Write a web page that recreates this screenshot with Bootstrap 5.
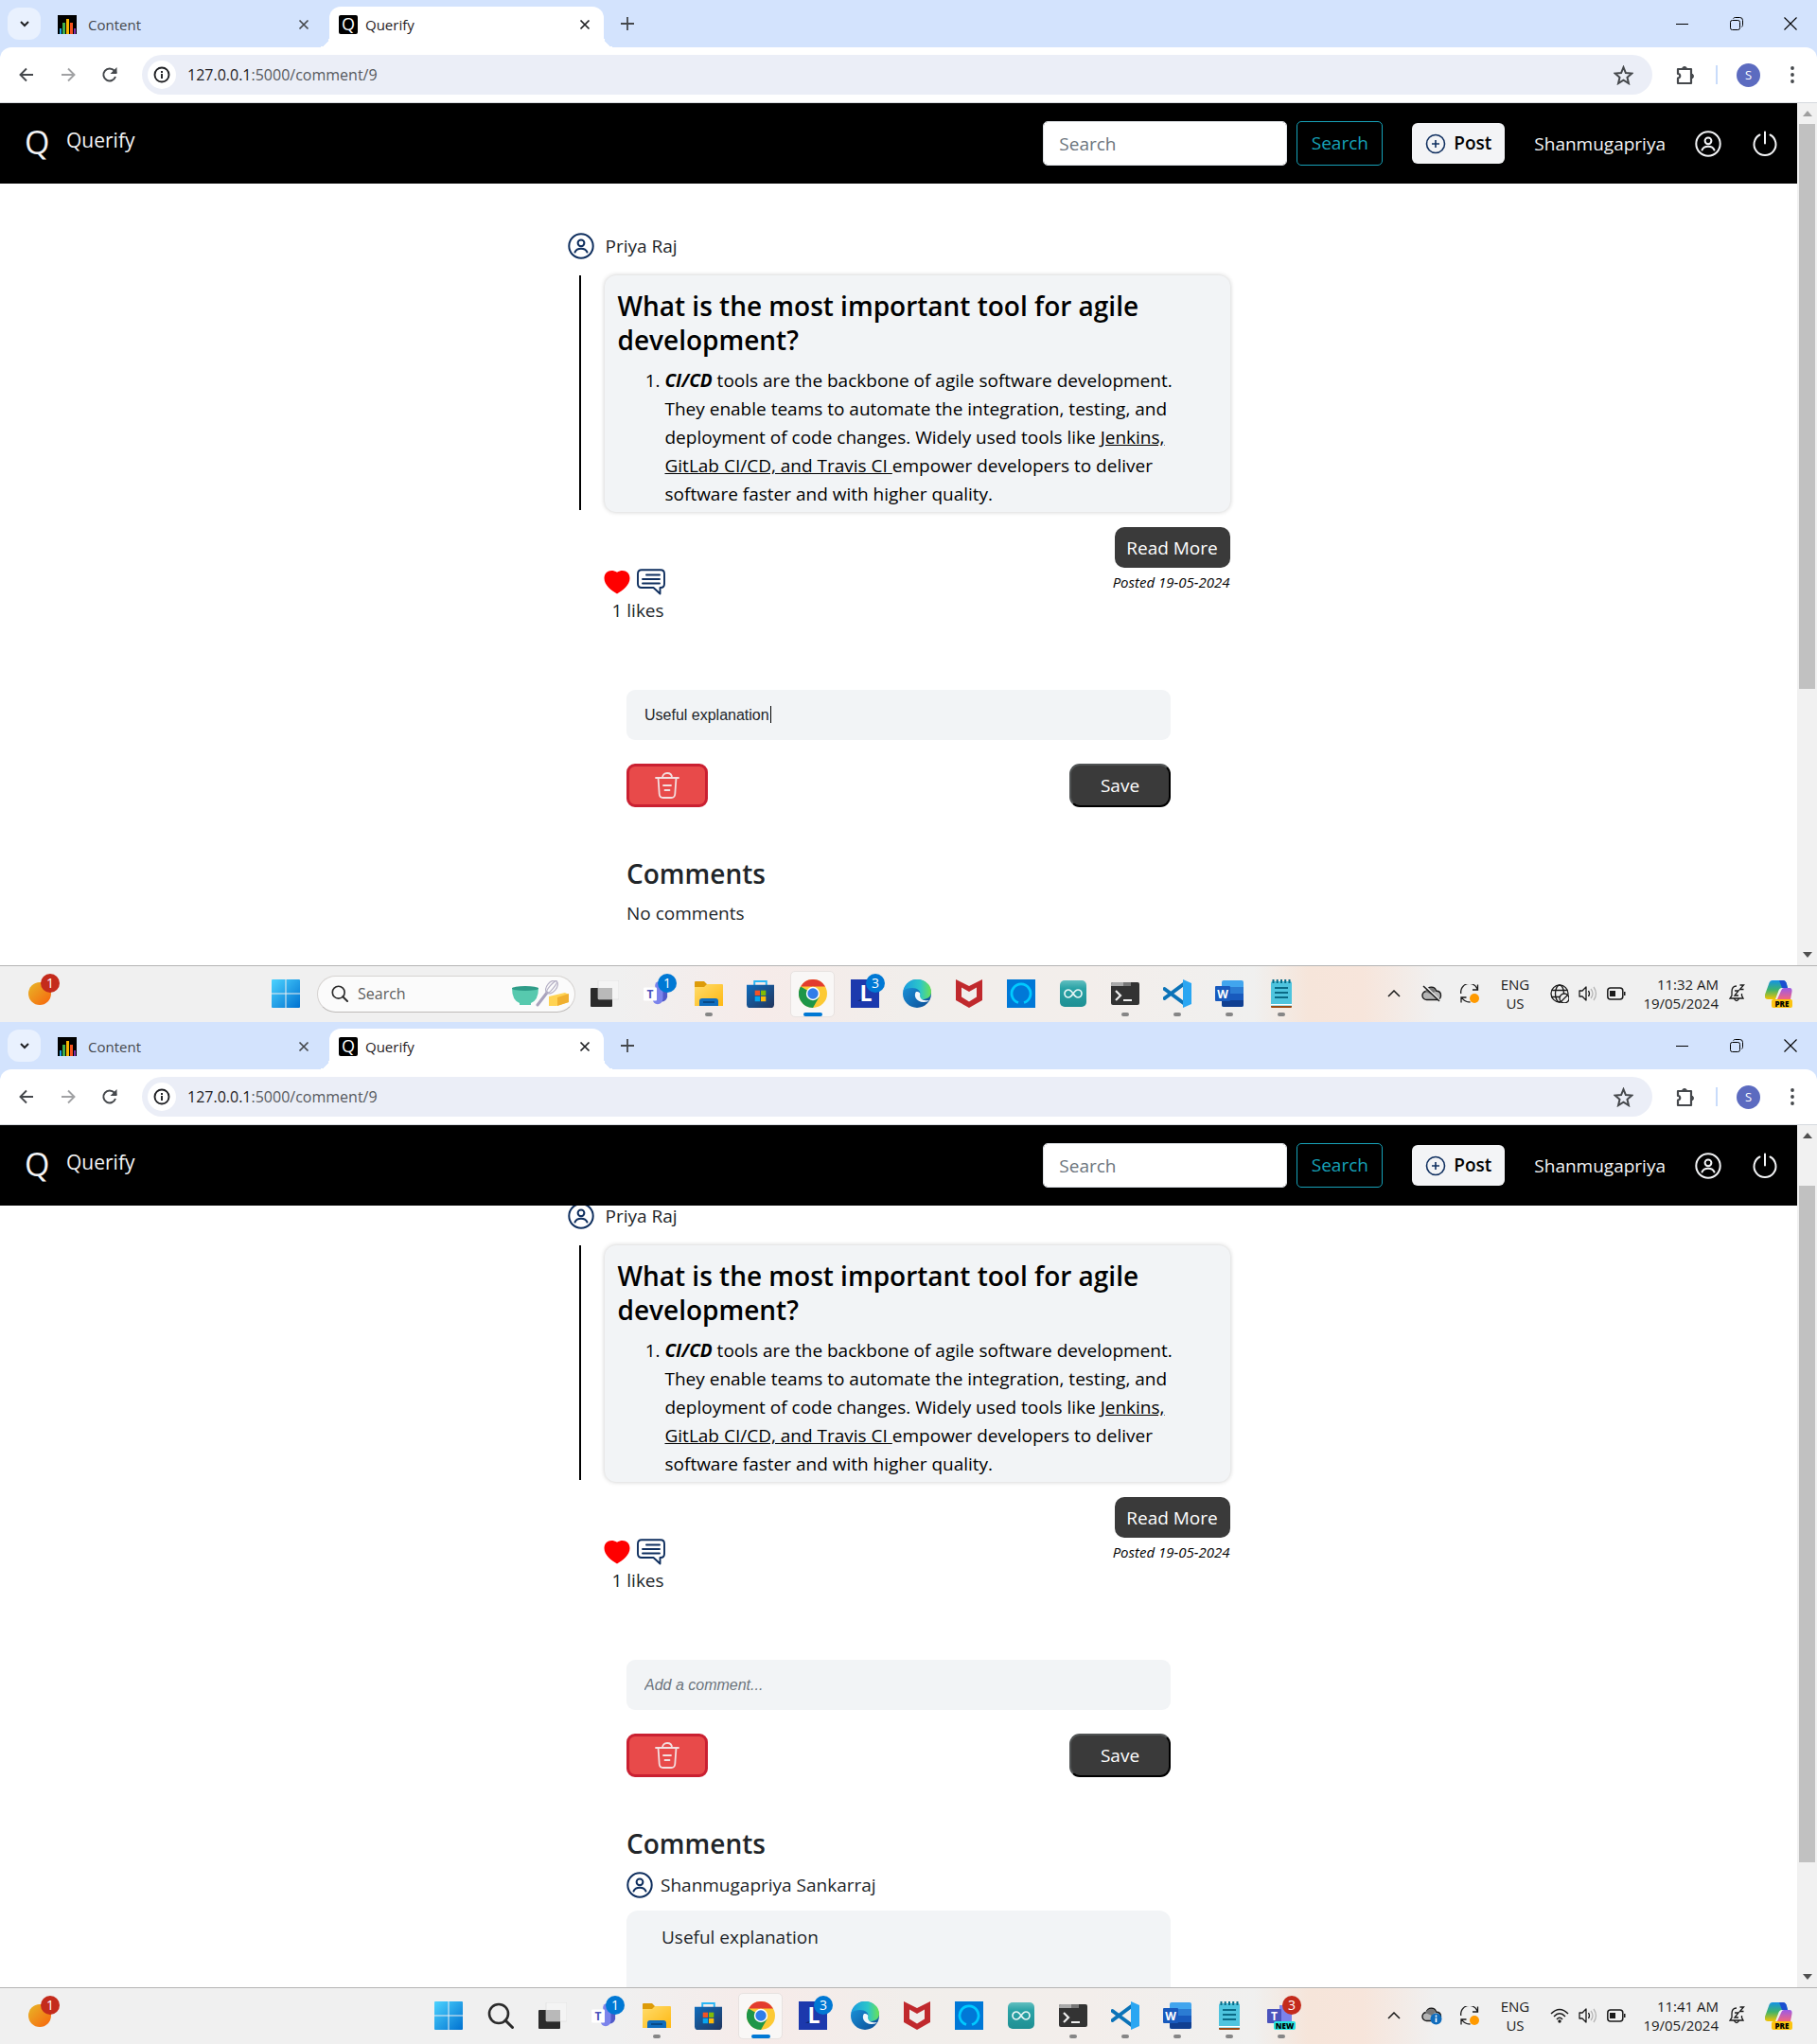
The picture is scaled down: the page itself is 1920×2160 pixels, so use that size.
<!DOCTYPE html>
<html lang="en">
<head>
<meta charset="utf-8">
<meta name="viewport" content="width=device-width, initial-scale=1">
<title>Querify</title>
<link href="https://cdn.jsdelivr.net/npm/bootstrap@5.3.0/dist/css/bootstrap.min.css" rel="stylesheet">
<style>
  body{font-family:"Open Sans","Noto Sans",sans-serif;font-size:19px;line-height:30px;color:#212529;background:#fff}
  svg{display:block;flex:none}
  button,a.plain{border:0;background:none;padding:0;color:inherit;text-decoration:none}
  .screen{height:50vh;min-height:900px;overflow:hidden}
  /* browser frame */
  .tabstrip{height:50px;background:#d3e3fd;font-size:15px;padding-left:8px}
  .tabmenu{width:35px;height:34px;border-radius:12px;background:#e9f1fe}
  .tab-item{width:290px;height:43px;padding:0 14px 6px 10px;color:#45484c}
  .tab-off{margin:0 7px 0 8px}
  .tab-on{background:#fff;border-radius:12px 12px 0 0;color:#1f2023;position:relative}
  .tab-on::before,.tab-on::after{content:"";position:absolute;bottom:0;width:12px;height:12px}
  .tab-on::before{left:-12px;background:radial-gradient(circle at 0 0,transparent 12px,#fff 12px)}
  .tab-on::after{right:-12px;background:radial-gradient(circle at 100% 0,transparent 12px,#fff 12px)}
  .favi{width:20px;height:20px;border-radius:2px;background:#000;color:#fff;font-size:18px;line-height:18px;text-align:center}
  .newtab{margin-left:18px}
  .wincell{width:57px}
  .toolbar-wrap{background:#d3e3fd}
  .toolbar{height:59px;background:#fff;border-bottom:1px solid #d5d9de;border-radius:12px 12px 0 0;padding:0 12px 0 6px;color:#45484c}
  .navcell{width:44px}
  .omni{height:42px;border-radius:21px;background:#ebeef7;padding:0 20px 0 6px;margin-left:12px}
  .omni-info{width:30px;height:30px;border-radius:50%;background:#fff;color:#1f2023}
  .omni-url{font-size:16px;color:#56595e}
  .omni-url b{font-weight:400;color:#1f2023}
  .divide{width:2px;height:20px;background:#c9dcfb;margin:0 20px 0 21px}
  .avatar{width:25px;height:25px;border-radius:50%;background:#5c6bc0;color:#fff;font-size:13px;line-height:25px;text-align:center}
  /* site */
  .site-nav{height:85px;background:#000;color:#f3f4f6;padding:0 20px 0 26px;flex:none}
  .logo-q{font-size:34px;line-height:36px;width:44px;padding-bottom:4px}
  .brand-name{font-size:21px}
  .nav-find{gap:10px;margin-right:31px}
  .nav-search{width:258px;height:47px;font-size:19px;border-radius:5px;padding:6px 16px}
  .nav-search::placeholder,.say::placeholder{color:#6c757d;opacity:1}
  .btn-teal{height:47px;width:91px;border:1px solid #17a2b8;color:#17a2b8;border-radius:5px;font-size:19px}
  .btn-post{width:98px;height:43px;background:#f3f4f6;color:#000;border-radius:6px;font-weight:600;font-size:19px}
  .nav-user{margin:0 31px}
  .pane{background:#fff;overflow:hidden}
  .post{width:100%;max-width:700px;padding-top:51px}
  .scrolled .post{margin-top:-55px}
  .ink{color:#0f2f5f}
  .rule-line{width:2px;flex:none;background:#000;margin:0 25px 2px 12px}
  .qcard{background:#f2f4f6;border-radius:12px;box-shadow:0 0 5px rgba(0,0,0,.22);color:#000;padding:14px 14px 4px}
  .qcard h2,.talk h2{font-size:28px;line-height:36px;font-weight:600;margin-bottom:10px}
  .qcard ol{padding:0 20px 0 50px;margin:0}
  .btn-more{width:122px;height:43px;border-radius:10px;background:#3a3a3a;color:#fff}
  .reacts{padding-left:38px;gap:7px}
  .likes{padding-left:47px}
  .posted{font-size:15px;color:#000}
  .talk{width:100%;max-width:575px;margin-top:69px}
  .say{width:100%;height:53px;border:0;border-radius:9px;background:#f2f4f6;padding:0 19px;font:16px "Liberation Sans",Arial,sans-serif;color:#212529;outline:0}
  .say:placeholder-shown{font-style:italic}
  .caret{position:absolute;left:152px;top:17px;width:1px;height:18px;background:#000}
  .talk-tools{margin-top:25px}
  .btn-del{width:86px;height:46px;border-radius:9px;border:3px solid #ca2031;background:#e84a4a}
  .btn-save{width:107px;height:46px;border-radius:11px;border:2px solid;border-color:#505354 #000 #000 #505354;background:#3a3a3a;color:#fff}
  .talk h2{margin-top:52px;margin-bottom:9px}
  .byline{height:34px;margin-bottom:10px}
  .remark{background:#f2f4f6;border-radius:12px;padding:13px 37px;min-height:160px}
  .sbar{width:21px;background:#f1f1f1;color:#505050;flex:none}
  .thumb{background:#c1c1c1;width:17px}
  /* taskbar */
  .taskbar{height:60px;flex:none;padding-bottom:1px;border-top:1px solid #b5b5b5;background:linear-gradient(90deg,#f0f0f0 0 34%,#f6ebe9 42%,#f1eeeb 50%,#f3eeeb 60%,#f0f0ef 69%,#f6e5da 72%,#f7e5db 75%,#f0f0f0 79%);color:#1a1a1a}
  .app{width:55px;height:58px;position:relative}
  .app::after{content:"";position:absolute;bottom:5px;width:0;height:4px;border-radius:2px;background:#868686}
  .run::after{width:8px}
  .live::after{width:20px;background:#0078d4}
  .live::before{content:"";position:absolute;left:4px;right:4px;top:5px;bottom:4px;background:#f9f7f6;border:1px solid #e7e2e0;border-radius:5px}
  .live svg{position:relative}
  .count{position:absolute;top:8px;left:29px;width:20px;height:20px;border-radius:50%;background:#0078d4;color:#fff;font-size:14px;line-height:20px;text-align:center}
  .count-red{background:#c42b1c}
  .widget{margin-left:14px}
  .pill{width:273px;height:39px;border:1px solid #d6d3d1;border-bottom-color:#bdbab8;border-radius:20px;background:#fbfbfb;margin:0 3px 0 6px;padding:0 5px 0 14px}
  .pill input{border:0;background:none;outline:0;font-size:16px;width:120px}
  .pill input::placeholder{color:#5c5c5c;opacity:1}
  .tray{margin-left:72px;padding-right:16px;font-size:15px;line-height:20px}
  .t40{width:40px}.t30{width:30px}.t48{width:48px}.lang{width:56px;margin-right:4px}.clock{width:93px}
</style>
<script src="https://cdn.jsdelivr.net/npm/bootstrap@5.3.0/dist/js/bootstrap.bundle.min.js"></script>
</head>
<body>
<svg width="0" height="0" class="position-absolute" aria-hidden="true">
  <defs>
    <linearGradient id="gWin" x1="0" y1="0" x2="1" y2="1"><stop offset="0" stop-color="#4cd3ff"/><stop offset="1" stop-color="#0071d0"/></linearGradient>
    <linearGradient id="gSun" x1="0" y1="0" x2="1" y2="1"><stop offset="0" stop-color="#e8b828"/><stop offset="1" stop-color="#f7630c"/></linearGradient>
    <linearGradient id="gFold" x1="0" y1="0" x2="1" y2="1"><stop offset="0" stop-color="#ffdc6b"/><stop offset="1" stop-color="#ffb812"/></linearGradient>
    <linearGradient id="gStore" x1="0" y1="0" x2="1" y2="1"><stop offset="0" stop-color="#0f6cbd"/><stop offset="1" stop-color="#22355c"/></linearGradient>
    <linearGradient id="gEdge" x1="0" y1="0" x2="1" y2="0"><stop offset="0" stop-color="#1a9de0"/><stop offset=".6" stop-color="#2cc6c9"/><stop offset="1" stop-color="#6be255"/></linearGradient>
    <linearGradient id="gEdge2" x1="0" y1="0" x2="1" y2="1"><stop offset="0" stop-color="#1b9be2"/><stop offset="1" stop-color="#0c4a92"/></linearGradient>
    <linearGradient id="gCop" x1="0" y1="0" x2="0" y2="1"><stop offset="0" stop-color="#1492e6"/><stop offset=".5" stop-color="#3db36c"/><stop offset="1" stop-color="#f5c400"/></linearGradient>
    <linearGradient id="gCop2" x1="0" y1="0" x2="0" y2="1"><stop offset="0" stop-color="#9a5be8"/><stop offset="1" stop-color="#f5657c"/></linearGradient>
    <linearGradient id="gArd" x1="0" y1="0" x2="0" y2="1"><stop offset="0" stop-color="#62bfc0"/><stop offset=".3" stop-color="#2ba3a6"/><stop offset="1" stop-color="#1e8f93"/></linearGradient>
  </defs>
</svg>
<svg class="d-none" aria-hidden="true">
  <symbol id="i-chev" viewBox="0 0 12 12"><path d="M2 4l4 4 4-4" fill="none" stroke="#1f2023" stroke-width="2"/></symbol>
  <symbol id="i-bars" viewBox="0 0 20 20"><path fill="#000" d="M0 0h20v20H0z"/><path fill="#19a0e8" d="M2 14h2v6H2z"/><path fill="#3fae49" d="M5 8h3v12H5z"/><path fill="#f4b400" d="M9 4h3v16H9z"/><path fill="#f4511e" d="M13 8h3v12h-3z"/><path fill="#7b2fa8" d="M17 14h2v6h-2z"/></symbol>
  <symbol id="i-x" viewBox="0 0 12 12"><path d="M1.500 1.500l9 9M10.500 1.500l-9 9" stroke="currentColor" stroke-width="1.700"/></symbol>
  <symbol id="i-plus" viewBox="0 0 14 14"><path d="M7 0v14M0 7h14" stroke="#45484c" stroke-width="1.800"/></symbol>
  <symbol id="i-back" viewBox="0 0 16 16"><path d="M15 8H2M8 1.500L1.500 8 8 14.500" fill="none" stroke="currentColor" stroke-width="1.900"/></symbol>
  <symbol id="i-fwd" viewBox="0 0 16 16"><path d="M1 8h13M8 1.500L14.500 8 8 14.500" fill="none" stroke="currentColor" stroke-width="1.900"/></symbol>
  <symbol id="i-reload" viewBox="0 0 18 18"><path d="M15 11a6.500 6.500 0 1 1-1.200-6.300L16 7" fill="none" stroke="currentColor" stroke-width="2"/><path d="M16.500 1v7h-7z" fill="currentColor"/></symbol>
  <symbol id="i-info" viewBox="0 0 18 18"><circle cx="9" cy="9" r="7.500" fill="none" stroke="currentColor" stroke-width="1.900"/><path d="M9 8v5M9 5v2" stroke="currentColor" stroke-width="1.900"/></symbol>
  <symbol id="i-star" viewBox="0 0 20 20"><path d="M10 2l2.300 5.700 6.100.5-4.600 4 1.400 6L10 15l-5.200 3.200 1.400-6-4.600-4 6.100-.5z" fill="none" stroke="currentColor" stroke-width="1.900"/></symbol>
  <symbol id="i-ext" viewBox="0 0 22 22"><path d="M3 5h14v15H3v-5.500c3 0 3-4.500 0-4.500z" fill="none" stroke="currentColor" stroke-width="2.200" stroke-linejoin="round"/><path d="M7.500 5a2.500 2.500 0 0 1 5 0M17 10a2.500 2.500 0 0 1 0 5" fill="currentColor" stroke="currentColor"/></symbol>
  <symbol id="i-dots" viewBox="0 0 4 18"><circle cx="2" cy="2" r="1.900" fill="currentColor"/><circle cx="2" cy="9" r="1.900" fill="currentColor"/><circle cx="2" cy="16" r="1.900" fill="currentColor"/></symbol>
  <symbol id="i-min" viewBox="0 0 14 14"><path d="M0 7.500h13" stroke="#000"/></symbol>
  <symbol id="i-rest" viewBox="0 0 14 14"><rect x=".5" y="3.500" width="10" height="10" rx="2" fill="none" stroke="#000"/><path d="M3.500 1.500q1-1 2-1h5q3 0 3 3v5q0 1-1 2" fill="none" stroke="#000"/></symbol>
  <symbol id="i-close" viewBox="0 0 14 14"><path d="M.5.5l13 13M13.500.5l-13 13" stroke="#000" stroke-width="1.100"/></symbol>
  <symbol id="i-user" viewBox="0 0 28 28"><g fill="none" stroke="currentColor" stroke-width="2"><circle cx="14" cy="14" r="12.700"/><circle cx="14" cy="10.800" r="3.400"/><path d="M7.500 20.500c1.200-2.800 3.500-3.800 6.500-3.800s5.300 1 6.500 3.800" stroke-linecap="round"/></g></symbol>
  <symbol id="i-power" viewBox="0 0 28 28"><path d="M14 1.500v12M8.500 4.500a11.500 11.500 0 1 0 11 0" fill="none" stroke="currentColor" stroke-width="2" stroke-linecap="round"/></symbol>
  <symbol id="i-add" viewBox="0 0 22 22"><path d="M11 7v8M7 11h8M11 1.500a9.500 9.500 0 1 1 0 19 9.500 9.500 0 0 1 0-19z" fill="none" stroke="#0f2f5f" stroke-width="1.600"/></symbol>
  <symbol id="i-heart" viewBox="0 0 28 26"><path fill="#f00" d="M14 25.500C8 22 .5 16.500.5 9 .5 1 8.500-1 14 2.800 19.500-1 27.500 1 27.500 9 27.500 16.500 20 22 14 25.500z"/></symbol>
  <symbol id="i-note" viewBox="0 0 30 28"><path d="M5 1.200h20q4 0 4 4V16q0 4-4 4h-.5v6.500L17.500 20H5q-4 0-4-4V5.200q0-4 4-4zM10 6.500h14M6 11h18M6 15.500h18" fill="none" stroke="#0f2f5f" stroke-width="1.900" stroke-linejoin="round" stroke-linecap="round"/></symbol>
  <symbol id="i-trash" viewBox="0 0 26 28"><path d="M1 6h24M8 6c0-3 2-5 5-5s5 2 5 5M3.500 6l1.200 17q.3 4 4 4h8.600q3.700 0 4-4l1.200-17M9 14h8M10.500 19h5" fill="none" stroke="#f3dfe0" stroke-width="1.800" stroke-linecap="round"/></symbol>
  <symbol id="i-up" viewBox="0 0 10 6"><path d="M5 0l5 6H0z" fill="currentColor"/></symbol>
  <symbol id="i-down" viewBox="0 0 10 6"><path d="M5 6l5-6H0z" fill="currentColor"/></symbol>
  <symbol id="a-sun" viewBox="0 0 24 24"><circle cx="12" cy="12" r="12" fill="url(#gSun)"/></symbol>
  <symbol id="a-win" viewBox="0 0 30 30"><path fill="url(#gWin)" d="M1 0h13.500v14.500H0V1q0-1 1-1zM15.500 0H29q1 0 1 1v13.500H15.500zM0 15.500h14.500V30H1q-1 0-1-1zM15.500 15.500H30V29q0 1-1 1H15.500z"/></symbol>
  <symbol id="a-mag" viewBox="0 0 28 28"><circle cx="12" cy="12" r="10" fill="none" stroke="#2b2b2b" stroke-width="2.600"/><path d="M19 19l7.500 7.500" stroke="#2b2b2b" stroke-width="3" stroke-linecap="round"/></symbol>
  <symbol id="a-bake" viewBox="0 0 62 28"><path fill="#57c9ae" d="M1 8h28q0 13-8 16v2H9v-2Q1 21 1 8z"/><ellipse cx="15" cy="8.500" rx="14" ry="2.500" fill="#2f9c88"/><path d="M28 26l10-13" stroke="#a9a3bd" stroke-width="3" stroke-linecap="round"/><g fill="none" stroke="#b5b0c5" stroke-width="1.200"><ellipse cx="43" cy="7" rx="5" ry="8" transform="rotate(40 43 7)"/><ellipse cx="43" cy="7" rx="2" ry="8" transform="rotate(40 43 7)"/></g><path fill="#ffd353" d="M40 17l17-4 4 2v8l-13 4h-8z"/><path fill="#f0b030" d="M49 18l12-4v9l-12 4z"/></symbol>
  <symbol id="a-view" viewBox="0 0 30 28"><rect y="8" width="23" height="20" rx="1" fill="#2b2b2b"/><rect x="8" width="22" height="20" rx="1" fill="#f4f4f4" stroke="#dadada" stroke-width=".6"/><path fill="#b9b9b9" d="M8 8h15v12H8z"/></symbol>
  <symbol id="a-team" viewBox="0 0 30 28"><circle cx="18" cy="5" r="5" fill="#7b83eb"/><path fill="#5059c9" d="M18 9h9v9q-2 6-8 5z"/><path fill="#7b83eb" d="M10 9h12v11q-1 6-6 6t-6-6z"/><rect y="7" width="15" height="15" rx="1" fill="#fff"/><text x="7.500" y="19" text-anchor="middle" font-size="13" font-weight="700" font-family="Open Sans" fill="#4b53bc">T</text></symbol>
  <symbol id="a-fold" viewBox="0 0 30 28"><path fill="#dd9b08" d="M1 1h9l3 3h8v6H0V2q0-1 1-1z"/><path fill="url(#gFold)" d="M0 7h10l3-3h16q1 0 1 1v22H0z"/><path fill="#0f6cbd" d="M5 27v-5q0-3 3-3h14q3 0 3 3v5z"/><path d="M9 23h12" stroke="#063f77" stroke-width="1.500"/></symbol>
  <symbol id="a-store" viewBox="0 0 30 30"><path d="M8.500 6V1h13v5" fill="none" stroke="#29b6f6" stroke-width="2"/><path fill="url(#gStore)" d="M0 5h30v21q0 4-4 4H4q-4 0-4-4z"/><path fill="#f35325" d="M9 11h5.500v5.500H9z"/><path fill="#81bc06" d="M15.500 11H21v5.500h-5.500z"/><path fill="#05a6f0" d="M9 17.500h5.500V23H9z"/><path fill="#ffba08" d="M15.500 17.500H21V23h-5.500z"/></symbol>
  <symbol id="a-chrome" viewBox="0 0 30 30"><circle cx="15" cy="15" r="15" fill="#fcc934"/><path fill="#1e9648" d="M2 7.500A15 15 0 0 0 15 30l6.500-11.200L15 15z"/><path fill="#e33b2e" d="M2 7.500A15 15 0 0 1 28 7.500H15z"/><path fill="#e33b2e" d="M2 7.500h13l-6.500 11.200z" opacity="0"/><circle cx="15" cy="15" r="7.200" fill="#fff"/><circle cx="15" cy="15" r="5.700" fill="#2f7de9"/></symbol>
  <symbol id="a-l" viewBox="0 0 30 30"><path fill="#1c39ad" d="M0 0h30v30H0z"/><path fill="#13266f" d="M7 23l5-3h10l-3 3z"/><text x="16" y="23" text-anchor="middle" font-size="23" font-weight="700" font-family="Open Sans" fill="#fff">L</text></symbol>
  <symbol id="a-edge" viewBox="0 0 30 30"><circle cx="15" cy="15" r="15" fill="url(#gEdge2)"/><path fill="url(#gEdge)" d="M.5 12C3 3 9 0 15 0c9 0 15 6 15 13 0 6-5 8-9 8-3 0-4-2-3-4 2-5-3-8-8-8-4 0-8 1-9.500 3z"/><path fill="#fff" opacity=".95" d="M14 13c-3 4 0 11 8 11 3 0 5-1 6-2-3 1-10 0-10-5 1-2 0-4-4-4z"/></symbol>
  <symbol id="a-mc" viewBox="0 0 28 30"><path fill="#c0292d" d="M0 0l14 7L28 0v22l-14 8-14-8z"/><path fill="#f1eeec" d="M6 8.500l8 4.500 8-4.500v10L14 23.500l-8-5z"/></symbol>
  <symbol id="a-alexa" viewBox="0 0 30 30"><path fill="#0078d7" d="M0 0h30v30H0z"/><path d="M12 24.500a10 10 0 1 1 6 0" fill="none" stroke="#00caff" stroke-width="2.800"/></symbol>
  <symbol id="a-ard" viewBox="0 0 28 28"><rect width="28" height="28" rx="5" fill="url(#gArd)"/><path d="M14 14c-2-3-3.500-4-5-4a4 4 0 0 0 0 8c1.500 0 3-1 5-4s3.500-4 5-4a4 4 0 0 1 0 8c-1.500 0-3-1-5-4z" fill="none" stroke="#e6f5f5" stroke-width="1.700"/></symbol>
  <symbol id="a-term" viewBox="0 0 30 24"><rect width="30" height="24" rx="2" fill="#333"/><path fill="#aaa" d="M2 0h11v4H0V2q0-2 2-2z"/><path fill="#777" d="M13 0h8v4h-8z"/><path d="M5 9l5 5-5 5M13 19h9" fill="none" stroke="#eee" stroke-width="2.200"/></symbol>
  <symbol id="a-code" viewBox="0 0 30 30"><path d="M1.500 10L23 26M1.500 20L23 4" stroke="#0b73b8" stroke-width="4" stroke-linecap="round"/><path fill="#2aa6f2" d="M21 0l9 4v22l-9 4z"/></symbol>
  <symbol id="a-word" viewBox="0 0 30 30"><rect x="7" y="1" width="23" height="28" rx="2" fill="#41a5ee"/><path fill="#2b7cd3" d="M7 8h23v7H7z"/><path fill="#185abd" d="M7 15h23v7H7z"/><path fill="#103f91" d="M7 22h23v5q0 2-2 2H9q-2 0-2-2z"/><rect y="7" width="16" height="16" rx="1" fill="#185abd"/><text x="8" y="19.500" text-anchor="middle" font-size="12" font-weight="700" font-family="Open Sans" fill="#fff">W</text></symbol>
  <symbol id="a-pad" viewBox="0 0 24 30"><rect x="1" y="2" width="22" height="27" rx="2" fill="#4ec4de"/><path fill="#9a4a13" d="M1 28h22v1q0 1-1 1H2q-1 0-1-1z"/><path fill="#fff" d="M1 26h22v1.500H1z"/><path d="M3.500 0v4M7.700 0v4M12 0v4M16.200 0v4M20.500 0v4" stroke="#0a6a86" stroke-width="2"/><path d="M5 9h14M5 14h14M5 19h14" stroke="#0a6a86" stroke-width="1.800"/></symbol>
  <symbol id="a-teamnew" viewBox="0 0 30 30"><path fill="#7b83eb" d="M13 4h13v17H13z"/><rect y="8" width="15" height="15" rx="1" fill="#4b53bc"/><text x="7.500" y="20" text-anchor="middle" font-size="12" font-weight="700" font-family="Open Sans" fill="#fff">T</text><rect x="7" y="21" width="23" height="9" rx="2" fill="#27e5e0"/><text x="18.500" y="29" text-anchor="middle" font-size="8" font-weight="800" font-family="Open Sans" fill="#000">NEW</text></symbol>
  <symbol id="t-chev" viewBox="0 0 14 8"><path d="M1 7l6-6 6 6" fill="none" stroke="#1a1a1a" stroke-width="1.500"/></symbol>
  <symbol id="t-cloud" viewBox="0 0 22 18"><path d="M6 15.500a4.500 4.500 0 0 1-1-9C7 1 14 1 15.500 6c7 .5 6 9.500 1 9.500z" fill="#b4b4b4" stroke="#1a1a1a" stroke-width="1.400"/><path d="M4 7c4-6 9-5 11-1l-4 4z" fill="#777"/></symbol>
  <symbol id="t-slash" viewBox="0 0 22 18"><path d="M3 0l17 17" stroke="#f0f0f0" stroke-width="2"/><path d="M2 1l17 16" stroke="#1a1a1a" stroke-width="1.500"/></symbol>
  <symbol id="t-sync" viewBox="0 0 20 20"><path d="M.8 10A9 9 0 0 1 18 5M18.500.5V6H13M1 19.500V14h5.500M1.500 14q3 5 9 5" fill="none" stroke="#1a1a1a" stroke-width="1.300"/><circle cx="15" cy="15" r="5" fill="#ff9a00"/></symbol>
  <symbol id="t-globe" viewBox="0 0 20 20"><g fill="none" stroke="#1a1a1a" stroke-width="1.300"><circle cx="10" cy="10" r="9"/><ellipse cx="10" cy="10" rx="4.500" ry="9"/><path d="M1.500 6.500h17M1.500 13.500h17"/><circle cx="15" cy="15" r="5" fill="#f0f0f0"/><path d="M11.500 18.500l7-7"/></g></symbol>
  <symbol id="t-wifi" viewBox="0 0 20 16"><g fill="none" stroke="#1a1a1a" stroke-width="1.500"><path d="M1 6q9-9 18 0M4 9q6-6.500 12 0M7 12q3-3.500 6 0"/></g><circle cx="10" cy="14" r="1.700" fill="#1a1a1a"/></symbol>
  <symbol id="t-vol" viewBox="0 0 20 16"><path d="M1 5h3l4-4v14l-4-4H1z" fill="none" stroke="#1a1a1a" stroke-width="1.300" stroke-linejoin="round"/><path d="M10.500 5q2 3 0 6" fill="none" stroke="#1a1a1a" stroke-width="1.300"/><path d="M13 3q4 5 0 10M16 1q5 7 0 14" fill="none" stroke="#b5b5b5" stroke-width="1.300"/></symbol>
  <symbol id="t-bat" viewBox="0 0 20 14"><rect x=".8" y="1" width="16" height="12" rx="3" fill="none" stroke="#1a1a1a" stroke-width="1.500"/><path d="M3 4h6v6H3zM18 5h1.500v4H18z" fill="#1a1a1a"/></symbol>
  <symbol id="t-bell" viewBox="0 0 20 20"><path d="M9 2C5.500 2 4 5 4 8v4l-2 3h14l-1.500-3v-2M6.500 15.500q2.500 4 5 0" fill="none" stroke="#1a1a1a" stroke-width="1.300"/><path d="M12.500 1h4l-4 4.500h4M7 7h4l-4 5h4" fill="none" stroke="#1a1a1a" stroke-width="1.300"/></symbol>
  <symbol id="t-cop" viewBox="0 0 30 29"><path fill="url(#gCop)" d="M8 0h11q3 0 4 4l1 4h-6q-3 0-4 4l-3 8H3q-4 0-3-5L4 4q1-4 4-4z"/><path fill="#1b4fd0" d="M15 0h4q3 0 4 4l1 4h-6z"/><path fill="url(#gCop2)" d="M20 8h6q3 0 2.500 4L27 20H13l4-9q1-3 3-3z"/><rect x="7" y="20" width="22" height="9" rx="2" fill="#fcc410"/><text x="18" y="27.500" text-anchor="middle" font-size="8" font-weight="800" font-family="Open Sans" fill="#000">PRE</text></symbol>
</svg>

<!-- Writing a comment -->
<section class="screen d-flex flex-column">
  <header>
    <div class="tabstrip d-flex align-items-end">
      <button class="tabmenu d-flex align-items-center justify-content-center mb-2" aria-label="Search tabs"><svg width="12" height="12"><use href="#i-chev"/></svg></button>
      <div class="tab-item tab-off d-flex align-items-center gap-2"><svg width="20" height="20"><use href="#i-bars"/></svg><span class="flex-grow-1 ps-1">Content</span><button aria-label="Close tab"><svg width="12" height="12"><use href="#i-x"/></svg></button></div>
      <div class="tab-item tab-on d-flex align-items-center gap-2"><span class="favi">Q</span><span class="flex-grow-1">Querify</span><button aria-label="Close tab"><svg width="12" height="12"><use href="#i-x"/></svg></button></div>
      <button class="newtab align-self-center" aria-label="New tab"><svg width="14" height="14"><use href="#i-plus"/></svg></button>
      <div class="ms-auto d-flex align-self-center">
        <button class="wincell d-flex justify-content-center" aria-label="Minimise"><svg width="14" height="14"><use href="#i-min"/></svg></button>
        <button class="wincell d-flex justify-content-center" aria-label="Restore"><svg width="14" height="14"><use href="#i-rest"/></svg></button>
        <button class="wincell d-flex justify-content-center" aria-label="Close"><svg width="14" height="14"><use href="#i-close"/></svg></button>
      </div>
    </div>
    <div class="toolbar-wrap"><div class="toolbar d-flex align-items-center">
      <button class="navcell d-flex justify-content-center" aria-label="Back"><svg width="16" height="16"><use href="#i-back"/></svg></button>
      <button class="navcell d-flex justify-content-center opacity-50" aria-label="Forward"><svg width="16" height="16"><use href="#i-fwd"/></svg></button>
      <button class="navcell d-flex justify-content-center" aria-label="Reload"><svg width="18" height="18"><use href="#i-reload"/></svg></button>
      <div class="omni flex-grow-1 d-flex align-items-center">
        <span class="omni-info d-flex align-items-center justify-content-center me-2"><svg width="18" height="18"><use href="#i-info"/></svg></span>
        <span class="omni-url ms-1"><b>127.0.0.1</b>:5000/comment/9</span>
        <button class="ms-auto" aria-label="Bookmark"><svg width="21" height="21"><use href="#i-star"/></svg></button>
      </div>
      <button class="ms-4" aria-label="Extensions"><svg width="22" height="22"><use href="#i-ext"/></svg></button>
      <span class="divide"></span>
      <span class="avatar">S</span>
      <button class="ms-4 ps-2 pe-2 me-1" aria-label="Menu"><svg width="4" height="18"><use href="#i-dots"/></svg></button>
    </div></div>
  </header>
  <div class="d-flex flex-grow-1 overflow-hidden">
    <div class="flex-grow-1 d-flex flex-column">
      <nav class="site-nav d-flex align-items-center">
        <a class="plain d-flex align-items-center" href="#"><span class="logo-q">Q</span><span class="brand-name pb-2">Querify</span></a>
        <form class="nav-find d-flex ms-auto">
          <input class="form-control nav-search" type="search" placeholder="Search" aria-label="Search questions">
          <button class="btn btn-teal p-0" type="button">Search</button>
        </form>
        <button class="btn btn-post p-0 d-flex align-items-center justify-content-center gap-2"><svg width="22" height="22"><use href="#i-add"/></svg>Post</button>
        <a class="plain nav-user" href="#">Shanmugapriya</a>
        <a class="plain" href="#" aria-label="Profile"><svg width="28" height="28"><use href="#i-user"/></svg></a>
        <a class="plain ms-4 ps-2" href="#" aria-label="Log out"><svg width="28" height="28"><use href="#i-power"/></svg></a>
      </nav>
      <main class="pane flex-grow-1">
        <article class="post mx-auto">
          <div class="d-flex align-items-center gap-2 ink mb-3"><svg width="28" height="28"><use href="#i-user"/></svg><span class="text-body ps-1">Priya Raj</span></div>
          <div class="d-flex"><div class="rule-line"></div>
            <div class="qcard flex-grow-1">
              <h2>What is the most important tool for agile development?</h2>
              <ol><li><b class="fst-italic">CI/CD</b> tools are the backbone of agile software development. They enable teams to automate the integration, testing, and deployment of code changes. Widely used tools like <u>Jenkins, GitLab CI/CD, and Travis CI </u>empower developers to deliver software faster and with higher quality.</li></ol>
            </div>
          </div>
          <div class="d-flex justify-content-end mt-3"><button class="btn-more">Read More</button></div>
          <div class="reacts d-flex align-items-center"><button aria-label="Like"><svg width="28" height="26"><use href="#i-heart"/></svg></button><button aria-label="Comment"><svg width="30" height="28"><use href="#i-note"/></svg></button><i class="posted ms-auto">Posted 19-05-2024</i></div>
          <div class="likes">1 likes</div>
        </article>
        <section class="talk mx-auto">
          <div class="position-relative"><input class="say d-block" type="text" value="Useful explanation" placeholder="Add a comment..." aria-label="Comment text"><span class="caret"></span></div>
          <div class="talk-tools d-flex justify-content-between"><button class="btn-del d-flex align-items-center justify-content-center" aria-label="Delete"><svg width="26" height="28"><use href="#i-trash"/></svg></button><button class="btn-save">Save</button></div>
          <h2>Comments</h2>
          <p class="mb-0">No comments</p>
        </section>
      </main>
    </div>
    <div class="sbar d-flex flex-column align-items-center"><svg class="my-2 opacity-50" width="10" height="6"><use href="#i-up"/></svg><div class="thumb" style="height:65.5%"></div><svg class="mt-auto mb-2" width="10" height="6"><use href="#i-down"/></svg></div>
  </div>
  <footer class="taskbar d-flex align-items-center">
    <a class="app widget plain d-flex align-items-center justify-content-center" href="#" aria-label="Widgets"><svg width="24" height="24"><use href="#a-sun"/></svg><span class="count count-red">1</span></a>
    <a class="app plain ms-auto d-flex align-items-center justify-content-center" href="#" aria-label="Start"><svg width="30" height="30"><use href="#a-win"/></svg></a>
    <div class="pill d-flex align-items-center"><svg width="18" height="18"><use href="#a-mag"/></svg><input class="ms-2 me-auto" type="text" placeholder="Search" aria-label="Search Windows"><svg width="62" height="28"><use href="#a-bake"/></svg></div>
    <a class="app plain d-flex align-items-center justify-content-center" href="#" aria-label="Task view"><svg width="30" height="28"><use href="#a-view"/></svg></a>
    <a class="app plain d-flex align-items-center justify-content-center" href="#" aria-label="Teams"><svg width="28" height="26"><use href="#a-team"/></svg><span class="count">1</span></a>
    <a class="app run plain d-flex align-items-center justify-content-center" href="#" aria-label="Explorer"><svg width="30" height="28"><use href="#a-fold"/></svg></a>
    <a class="app plain d-flex align-items-center justify-content-center" href="#" aria-label="Store"><svg width="29" height="29"><use href="#a-store"/></svg></a>
    <a class="app live plain d-flex align-items-center justify-content-center" href="#" aria-label="Chrome"><svg width="30" height="30"><use href="#a-chrome"/></svg></a>
    <a class="app plain d-flex align-items-center justify-content-center" href="#" aria-label="L"><svg width="30" height="30"><use href="#a-l"/></svg><span class="count">3</span></a>
    <a class="app plain d-flex align-items-center justify-content-center" href="#" aria-label="Edge"><svg width="30" height="30"><use href="#a-edge"/></svg></a>
    <a class="app plain d-flex align-items-center justify-content-center" href="#" aria-label="McAfee"><svg width="28" height="30"><use href="#a-mc"/></svg></a>
    <a class="app plain d-flex align-items-center justify-content-center" href="#" aria-label="Alexa"><svg width="30" height="30"><use href="#a-alexa"/></svg></a>
    <a class="app plain d-flex align-items-center justify-content-center" href="#" aria-label="Arduino"><svg width="28" height="28"><use href="#a-ard"/></svg></a>
    <a class="app run plain d-flex align-items-center justify-content-center" href="#" aria-label="Terminal"><svg width="30" height="24"><use href="#a-term"/></svg></a>
    <a class="app run plain d-flex align-items-center justify-content-center" href="#" aria-label="Code"><svg width="30" height="30"><use href="#a-code"/></svg></a>
    <a class="app run plain d-flex align-items-center justify-content-center" href="#" aria-label="Word"><svg width="30" height="30"><use href="#a-word"/></svg></a>
    <a class="app run plain d-flex align-items-center justify-content-center" href="#" aria-label="Notepad"><svg width="24" height="30"><use href="#a-pad"/></svg></a>
    <div class="tray d-flex align-items-center">
      <div class="t40 d-flex justify-content-center"><svg width="14" height="8"><use href="#t-chev"/></svg></div>
      <div class="t40 d-flex justify-content-center"><svg width="22" height="18"><use href="#t-cloud"/><use href="#t-slash"/></svg></div>
      <div class="t40 d-flex justify-content-center"><svg width="20" height="20"><use href="#t-sync"/></svg></div>
      <div class="lang text-center">ENG<br>US</div>
      <div class="t30 d-flex justify-content-center"><svg width="20" height="20"><use href="#t-globe"/></svg></div>
      <div class="t30 d-flex justify-content-center"><svg width="20" height="16"><use href="#t-vol"/></svg></div>
      <div class="t30 d-flex justify-content-center"><svg width="20" height="14"><use href="#t-bat"/></svg></div>
      <div class="clock text-end">11:32 AM<br>19/05/2024</div>
      <div class="t40 d-flex justify-content-center"><svg width="20" height="20"><use href="#t-bell"/></svg></div>
      <div class="t48 d-flex justify-content-center"><svg width="30" height="29"><use href="#t-cop"/></svg></div>
    </div>
  </footer>
</section>

<!-- Comment saved, page scrolled -->
<section class="screen d-flex flex-column">
  <header>
    <div class="tabstrip d-flex align-items-end">
      <button class="tabmenu d-flex align-items-center justify-content-center mb-2" aria-label="Search tabs"><svg width="12" height="12"><use href="#i-chev"/></svg></button>
      <div class="tab-item tab-off d-flex align-items-center gap-2"><svg width="20" height="20"><use href="#i-bars"/></svg><span class="flex-grow-1 ps-1">Content</span><button aria-label="Close tab"><svg width="12" height="12"><use href="#i-x"/></svg></button></div>
      <div class="tab-item tab-on d-flex align-items-center gap-2"><span class="favi">Q</span><span class="flex-grow-1">Querify</span><button aria-label="Close tab"><svg width="12" height="12"><use href="#i-x"/></svg></button></div>
      <button class="newtab align-self-center" aria-label="New tab"><svg width="14" height="14"><use href="#i-plus"/></svg></button>
      <div class="ms-auto d-flex align-self-center">
        <button class="wincell d-flex justify-content-center" aria-label="Minimise"><svg width="14" height="14"><use href="#i-min"/></svg></button>
        <button class="wincell d-flex justify-content-center" aria-label="Restore"><svg width="14" height="14"><use href="#i-rest"/></svg></button>
        <button class="wincell d-flex justify-content-center" aria-label="Close"><svg width="14" height="14"><use href="#i-close"/></svg></button>
      </div>
    </div>
    <div class="toolbar-wrap"><div class="toolbar d-flex align-items-center">
      <button class="navcell d-flex justify-content-center" aria-label="Back"><svg width="16" height="16"><use href="#i-back"/></svg></button>
      <button class="navcell d-flex justify-content-center opacity-50" aria-label="Forward"><svg width="16" height="16"><use href="#i-fwd"/></svg></button>
      <button class="navcell d-flex justify-content-center" aria-label="Reload"><svg width="18" height="18"><use href="#i-reload"/></svg></button>
      <div class="omni flex-grow-1 d-flex align-items-center">
        <span class="omni-info d-flex align-items-center justify-content-center me-2"><svg width="18" height="18"><use href="#i-info"/></svg></span>
        <span class="omni-url ms-1"><b>127.0.0.1</b>:5000/comment/9</span>
        <button class="ms-auto" aria-label="Bookmark"><svg width="21" height="21"><use href="#i-star"/></svg></button>
      </div>
      <button class="ms-4" aria-label="Extensions"><svg width="22" height="22"><use href="#i-ext"/></svg></button>
      <span class="divide"></span>
      <span class="avatar">S</span>
      <button class="ms-4 ps-2 pe-2 me-1" aria-label="Menu"><svg width="4" height="18"><use href="#i-dots"/></svg></button>
    </div></div>
  </header>
  <div class="d-flex flex-grow-1 overflow-hidden">
    <div class="flex-grow-1 d-flex flex-column">
      <nav class="site-nav d-flex align-items-center">
        <a class="plain d-flex align-items-center" href="#"><span class="logo-q">Q</span><span class="brand-name pb-2">Querify</span></a>
        <form class="nav-find d-flex ms-auto">
          <input class="form-control nav-search" type="search" placeholder="Search" aria-label="Search questions">
          <button class="btn btn-teal p-0" type="button">Search</button>
        </form>
        <button class="btn btn-post p-0 d-flex align-items-center justify-content-center gap-2"><svg width="22" height="22"><use href="#i-add"/></svg>Post</button>
        <a class="plain nav-user" href="#">Shanmugapriya</a>
        <a class="plain" href="#" aria-label="Profile"><svg width="28" height="28"><use href="#i-user"/></svg></a>
        <a class="plain ms-4 ps-2" href="#" aria-label="Log out"><svg width="28" height="28"><use href="#i-power"/></svg></a>
      </nav>
      <main class="pane scrolled flex-grow-1">
        <article class="post mx-auto">
          <div class="d-flex align-items-center gap-2 ink mb-3"><svg width="28" height="28"><use href="#i-user"/></svg><span class="text-body ps-1">Priya Raj</span></div>
          <div class="d-flex"><div class="rule-line"></div>
            <div class="qcard flex-grow-1">
              <h2>What is the most important tool for agile development?</h2>
              <ol><li><b class="fst-italic">CI/CD</b> tools are the backbone of agile software development. They enable teams to automate the integration, testing, and deployment of code changes. Widely used tools like <u>Jenkins, GitLab CI/CD, and Travis CI </u>empower developers to deliver software faster and with higher quality.</li></ol>
            </div>
          </div>
          <div class="d-flex justify-content-end mt-3"><button class="btn-more">Read More</button></div>
          <div class="reacts d-flex align-items-center"><button aria-label="Like"><svg width="28" height="26"><use href="#i-heart"/></svg></button><button aria-label="Comment"><svg width="30" height="28"><use href="#i-note"/></svg></button><i class="posted ms-auto">Posted 19-05-2024</i></div>
          <div class="likes">1 likes</div>
        </article>
        <section class="talk mx-auto">
          <input class="say d-block" type="text" placeholder="Add a comment..." aria-label="Comment text">
          <div class="talk-tools d-flex justify-content-between"><button class="btn-del d-flex align-items-center justify-content-center" aria-label="Delete"><svg width="26" height="28"><use href="#i-trash"/></svg></button><button class="btn-save">Save</button></div>
          <h2>Comments</h2>
          <div class="byline d-flex align-items-center gap-2 ink"><svg width="28" height="28"><use href="#i-user"/></svg><span class="text-body">Shanmugapriya Sankarraj</span></div>
          <div class="remark">Useful explanation</div>
        </section>
      </main>
    </div>
    <div class="sbar d-flex flex-column align-items-center"><svg class="my-2" width="10" height="6"><use href="#i-up"/></svg><div class="thumb" style="height:78.5%;margin-top:42px"></div><svg class="mt-auto mb-2" width="10" height="6"><use href="#i-down"/></svg></div>
  </div>
  <footer class="taskbar d-flex align-items-center">
    <a class="app widget plain d-flex align-items-center justify-content-center" href="#" aria-label="Widgets"><svg width="24" height="24"><use href="#a-sun"/></svg><span class="count count-red">1</span></a>
    <a class="app plain ms-auto d-flex align-items-center justify-content-center" href="#" aria-label="Start"><svg width="30" height="30"><use href="#a-win"/></svg></a>
    <a class="app plain d-flex align-items-center justify-content-center" href="#" aria-label="Search"><svg width="28" height="28"><use href="#a-mag"/></svg></a>
    <a class="app plain d-flex align-items-center justify-content-center" href="#" aria-label="Task view"><svg width="30" height="28"><use href="#a-view"/></svg></a>
    <a class="app plain d-flex align-items-center justify-content-center" href="#" aria-label="Teams"><svg width="28" height="26"><use href="#a-team"/></svg><span class="count">1</span></a>
    <a class="app run plain d-flex align-items-center justify-content-center" href="#" aria-label="Explorer"><svg width="30" height="28"><use href="#a-fold"/></svg></a>
    <a class="app plain d-flex align-items-center justify-content-center" href="#" aria-label="Store"><svg width="29" height="29"><use href="#a-store"/></svg></a>
    <a class="app live plain d-flex align-items-center justify-content-center" href="#" aria-label="Chrome"><svg width="30" height="30"><use href="#a-chrome"/></svg></a>
    <a class="app plain d-flex align-items-center justify-content-center" href="#" aria-label="L"><svg width="30" height="30"><use href="#a-l"/></svg><span class="count">3</span></a>
    <a class="app plain d-flex align-items-center justify-content-center" href="#" aria-label="Edge"><svg width="30" height="30"><use href="#a-edge"/></svg></a>
    <a class="app plain d-flex align-items-center justify-content-center" href="#" aria-label="McAfee"><svg width="28" height="30"><use href="#a-mc"/></svg></a>
    <a class="app plain d-flex align-items-center justify-content-center" href="#" aria-label="Alexa"><svg width="30" height="30"><use href="#a-alexa"/></svg></a>
    <a class="app plain d-flex align-items-center justify-content-center" href="#" aria-label="Arduino"><svg width="28" height="28"><use href="#a-ard"/></svg></a>
    <a class="app run plain d-flex align-items-center justify-content-center" href="#" aria-label="Terminal"><svg width="30" height="24"><use href="#a-term"/></svg></a>
    <a class="app run plain d-flex align-items-center justify-content-center" href="#" aria-label="Code"><svg width="30" height="30"><use href="#a-code"/></svg></a>
    <a class="app run plain d-flex align-items-center justify-content-center" href="#" aria-label="Word"><svg width="30" height="30"><use href="#a-word"/></svg></a>
    <a class="app run plain d-flex align-items-center justify-content-center" href="#" aria-label="Notepad"><svg width="24" height="30"><use href="#a-pad"/></svg></a>
    <a class="app run plain d-flex align-items-center justify-content-center" href="#" aria-label="New Teams"><svg width="30" height="30"><use href="#a-teamnew"/></svg><span class="count count-red">3</span></a>
    <div class="tray d-flex align-items-center">
      <div class="t40 d-flex justify-content-center"><svg width="14" height="8"><use href="#t-chev"/></svg></div>
      <div class="t40 d-flex justify-content-center"><svg width="22" height="20" viewBox="0 0 22 20"><use href="#t-cloud" width="22" height="18"/><circle cx="15.500" cy="13.500" r="6" fill="#0f6cbd"/><path d="M15.500 12.500v4.500M15.500 9.500v2" stroke="#fff" stroke-width="1.600"/></svg></div>
      <div class="t40 d-flex justify-content-center"><svg width="20" height="20"><use href="#t-sync"/></svg></div>
      <div class="lang text-center">ENG<br>US</div>
      <div class="t30 d-flex justify-content-center"><svg width="20" height="16"><use href="#t-wifi"/></svg></div>
      <div class="t30 d-flex justify-content-center"><svg width="20" height="16"><use href="#t-vol"/></svg></div>
      <div class="t30 d-flex justify-content-center"><svg width="20" height="14"><use href="#t-bat"/></svg></div>
      <div class="clock text-end">11:41 AM<br>19/05/2024</div>
      <div class="t40 d-flex justify-content-center"><svg width="20" height="20"><use href="#t-bell"/></svg></div>
      <div class="t48 d-flex justify-content-center"><svg width="30" height="29"><use href="#t-cop"/></svg></div>
    </div>
  </footer>
</section>
</body>
</html>
